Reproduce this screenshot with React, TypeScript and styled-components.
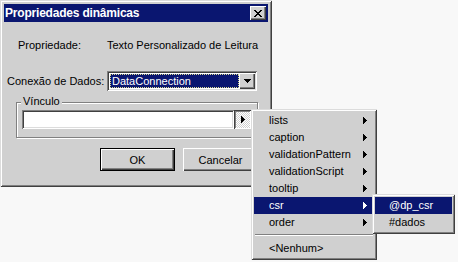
import React from "react";
import styled, { createGlobalStyle, css } from "styled-components";

const FACE = "#d0d0d0";
const NAVY = "#0a1670";

const GlobalStyle = createGlobalStyle`
  html, body {
    margin: 0;
    padding: 0;
    background: #f8f8f8;
  }
  body {
    font-family: "Liberation Sans", Arial, sans-serif;
    font-size: 11px;
    color: #000;
  }
`;

const raisedWindow = css`
  box-shadow: inset 1px 1px #dcdcdc, inset -1px -1px #404040, inset 2px 2px #fff,
    inset -2px -2px #808080;
`;

const raisedButton = css`
  box-shadow: inset 1px 1px #fff, inset -1px -1px #404040, inset -2px -2px #808080;
`;

const sunken = css`
  box-shadow: inset 1px 1px #808080, inset -1px -1px #fff, inset 2px 2px #404040,
    inset -2px -2px #dcdcdc;
`;

const Stage = styled.div`
  position: relative;
  width: 458px;
  height: 262px;
  overflow: hidden;
`;

const Window = styled.div`
  width: 272px;
  height: 187px;
  box-sizing: border-box;
  padding: 4px;
  background: ${FACE};
  display: flex;
  flex-direction: column;
  ${raisedWindow}
`;

const TitleBar = styled.div`
  height: 18px;
  background: ${NAVY};
  display: flex;
  align-items: center;
  justify-content: space-between;
  padding: 0 2px 0 1px;
`;

const TitleText = styled.span`
  color: #fff;
  font-weight: bold;
  font-size: 12px;
  letter-spacing: -0.2px;
`;

const CloseButton = styled.div`
  width: 16px;
  height: 14px;
  background: ${FACE};
  display: grid;
  place-items: center;
  ${raisedButton}
`;

const Row = styled.div<{ $top: number; $indent: number }>`
  display: flex;
  align-items: center;
  margin-top: ${(p) => p.$top}px;
  padding-left: ${(p) => p.$indent}px;
  line-height: 14px;
  min-height: 14px;
`;

const Label = styled.span<{ $width: number }>`
  width: ${(p) => p.$width}px;
  flex: none;
`;

const Select = styled.div`
  width: 150px;
  height: 20px;
  box-sizing: border-box;
  padding: 2px;
  background: #fff;
  display: flex;
  ${sunken}
`;

const SelectedValue = styled.div`
  flex: 1;
  margin: 1px 0 1px 1px;
  background: ${NAVY};
  color: #fff;
  outline: 1px dotted #d8d890;
  outline-offset: -1px;
  padding-left: 2px;
  line-height: 14px;
`;

const DropButton = styled.div`
  width: 16px;
  background: ${FACE};
  display: grid;
  place-items: center;
  ${raisedButton}
`;

const Group = styled.div`
  position: relative;
  margin: 11px 10px 0 12px;
  border: 1px solid #808080;
  box-shadow: inset 1px 1px #fff, 1px 1px #fff;
  padding: 7px 6px 8px 5px;
  display: flex;
`;

const Legend = styled.span`
  position: absolute;
  top: -9px;
  left: 4px;
  padding: 0 2px;
  background: ${FACE};
  line-height: 14px;
`;

const TextField = styled.div`
  flex: 1;
  height: 19px;
  background: #fff;
  ${sunken}
`;

const PickButton = styled.div`
  width: 17px;
  height: 19px;
  display: grid;
  place-items: center;
  background: repeating-conic-gradient(#fff 0 25%, ${FACE} 0 50%) 0 0 / 2px 2px;
  box-shadow: inset 1px 1px #404040, inset -1px -1px #fff, inset 2px 2px #808080;
`;

const ButtonRow = styled.div`
  display: flex;
  justify-content: flex-end;
  gap: 8px;
  margin-top: 10px;
  padding-right: 10px;
`;

const PushButton = styled.div<{ $default?: boolean }>`
  width: 75px;
  height: 23px;
  box-sizing: border-box;
  display: grid;
  place-items: center;
  background: ${FACE};
  ${raisedButton}
  ${(p) =>
    p.$default &&
    css`
      border: 1px solid #000;
    `}
`;

const Menu = styled.div<{ $left: number; $top: number; $width: number }>`
  position: absolute;
  left: ${(p) => p.$left}px;
  top: ${(p) => p.$top}px;
  width: ${(p) => p.$width}px;
  box-sizing: border-box;
  padding: 3px;
  background: ${FACE};
  ${raisedWindow}
`;

const MenuItem = styled.div<{ $active?: boolean; $pad: number }>`
  height: 17px;
  line-height: 17px;
  display: flex;
  align-items: center;
  justify-content: space-between;
  padding: 0 7px 0 ${(p) => p.$pad}px;
  background: ${(p) => (p.$active ? NAVY : "transparent")};
  color: ${(p) => (p.$active ? "#fff" : "#000")};
`;

const Separator = styled.div`
  height: 2px;
  margin: 3px 1px 4px;
  border-top: 1px solid #808080;
  border-bottom: 1px solid #fff;
  box-sizing: border-box;
`;

const CloseGlyph = () => (
  <svg width="8" height="7" viewBox="0 0 8 7" shapeRendering="crispEdges">
    <path
      d="M0 0h2v1H0zM6 0h2v1H6zM1 1h2v1H1zM5 1h2v1H5zM2 2h4v1H2zM3 3h2v1H3zM2 4h4v1H2zM1 5h2v1H1zM5 5h2v1H5zM0 6h2v1H0zM6 6h2v1H6z"
      fill="#000"
    />
  </svg>
);

const DownArrow = () => (
  <svg width="7" height="4" viewBox="0 0 7 4" shapeRendering="crispEdges">
    <path d="M0 0h7v1H0zM1 1h5v1H1zM2 2h3v1H2zM3 3h1v1H3z" fill="#000" />
  </svg>
);

const RightArrow = ({ color = "currentColor" }: { color?: string }) => (
  <svg width="4" height="7" viewBox="0 0 4 7" shapeRendering="crispEdges">
    <path d="M0 0h1v7H0zM1 1h1v5H1zM2 2h1v3H2zM3 3h1v1H3z" fill={color} />
  </svg>
);

const bindings = [
  "lists",
  "caption",
  "validationPattern",
  "validationScript",
  "tooltip",
  "csr",
  "order",
];

export default function App() {
  return (
    <Stage>
      <GlobalStyle />
      <Window>
        <TitleBar>
          <TitleText>Propriedades dinâmicas</TitleText>
          <CloseButton>
            <CloseGlyph />
          </CloseButton>
        </TitleBar>

        <Row $top={16} $indent={14}>
          <Label $width={89}>Propriedade:</Label>
          <span>Texto Personalizado de Leitura</span>
        </Row>

        <Row $top={19} $indent={3}>
          <Label $width={100}>Conexão de Dados:</Label>
          <Select>
            <SelectedValue>DataConnection</SelectedValue>
            <DropButton>
              <DownArrow />
            </DropButton>
          </Select>
        </Row>

        <Group>
          <Legend>Vínculo</Legend>
          <TextField />
          <PickButton>
            <RightArrow color="#000" />
          </PickButton>
        </Group>

        <ButtonRow>
          <PushButton $default>OK</PushButton>
          <PushButton>Cancelar</PushButton>
        </ButtonRow>
      </Window>

      {/* context menu opened from the pick button */}
      <Menu $left={251} $top={109} $width={126}>
        {bindings.map((name) => (
          <MenuItem key={name} $pad={15} $active={name === "csr"}>
            <span>{name}</span>
            <RightArrow />
          </MenuItem>
        ))}
        <Separator />
        <MenuItem $pad={15}>&lt;Nenhum&gt;</MenuItem>
      </Menu>

      <Menu $left={372} $top={194} $width={83}>
        <MenuItem $pad={14} $active>
          @dp_csr
        </MenuItem>
        <MenuItem $pad={14}>#dados</MenuItem>
      </Menu>
    </Stage>
  );
}
